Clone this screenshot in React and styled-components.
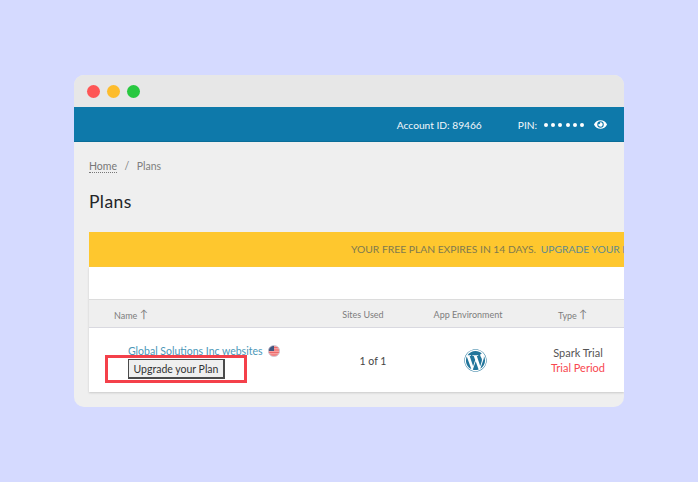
import React from "react";
import styled, { createGlobalStyle } from "styled-components";
import { FaWordpress, FaEye } from "react-icons/fa";

const Global = createGlobalStyle`
  html, body { margin: 0; padding: 0; background: #d5daff; }
  body { font-family: "Lato", "Open Sans", sans-serif; }
`;
const Page = styled.div`
  width: 698px; height: 482px; padding: 75px 74px; box-sizing: border-box; overflow: hidden;
`;
const Window = styled.div`
  width: 550px; height: 332px; border-radius: 10px; overflow: hidden; background: #efefef; display: flex; flex-direction: column;
`;
const TitleBar = styled.div`
  height: 32px; background: #e7e7e7; display: flex; align-items: center; gap: 7px; padding: 0 0 0 13px; flex: none;
`;
const Dot = styled.span`
  width: 13px; height: 13px; border-radius: 50%; background: ${p => p.$c}; display: block; margin-top: 1px;
`;
const TopBar = styled.div`
  height: 35px; flex: none; box-sizing: border-box; background: #0e79aa; border-bottom: 1px solid #0a6d98; color: #f2f7fa;
  display: flex; align-items: center; justify-content: flex-end; padding: 1px 17px 0 0; font-size: 10.2px;
`;
const Account = styled.span` margin-right: 36px;`;
const Pin = styled.span` display: flex; align-items: center; gap: 6px;`;
const Dots = styled.span` display: flex; gap: 3.2px; margin: 1px 4px 0 1px;`;
const PinDot = styled.i` width: 4px; height: 4px; border-radius: 50%; background: #fff; display: block;`;
const Content = styled.div` flex: 1; padding: 0 0 0 15px; display: flex; flex-direction: column; min-width: 0;`;
const Crumbs = styled.div`
  margin-top: 17px; height: 14px; display: flex; align-items: center; font-size: 10.5px; color: #7e7e7e; gap: 7.5px;
`;
const HomeLink = styled.a` color: #777; border-bottom: 1px dotted #777; line-height: 12px;`;
const Title = styled.h1`
  margin: 18px 0 0; font-size: 17.5px; line-height: 22px; font-weight: 400; color: #232528; letter-spacing: .4px;
`;
const Banner = styled.div`
  margin-top: 19px; height: 35px; width: 535px; flex: none; background: #fec72e; box-sizing: border-box; white-space: nowrap; overflow: hidden;
  font-size: 10.3px; line-height: 35px; color: #7e7a50; padding-left: 262px;
`;
const BannerLink = styled.a` color: #5e8a8f; margin-left: 2px;`;
const Card = styled.div`
  position: relative; width: 535px; background: #fff; box-shadow: 0 1px 2px #c9c9c9; flex: none;
`;
const Spacer = styled.div` height: 33px; box-sizing: border-box; border-bottom: 1px solid #dcdcdc;`;
const HeadRow = styled.div`
  display: grid; grid-template-columns: 226px 96px 114px 99px; height: 28px; box-sizing: border-box; background: #efefef; border-bottom: 1px solid #d9d9e0;
  align-items: center; font-size: 9px; color: #7d7d7d; padding-top: 1px;
`;
const HeadCell = styled.div`
  text-align: ${p => p.$left ? "left" : "center"}; padding-left: ${p => p.$left ? "25px" : "0"}; padding-right: ${p => p.$pr || 0}px;
`;
const Arrow = styled.span` font-size: 11px; margin-left: 2px; position: relative; top: -1px;`;
const Row = styled.div`
  display: grid; grid-template-columns: 226px 96px 114px 99px; height: 64px; align-items: center;
`;
const NameCell = styled.div` align-self: start; padding: 15px 0 0 39px; display: flex; flex-direction: column; align-items: flex-start;`;
const NameLine = styled.div` display: flex; align-items: center; gap: 6px; height: 16px;`;
const SiteLink = styled.a` color: #4b97b8; font-size: 10.5px;`;
const UpgradeBtn = styled.button`
  width: 97px; height: 20px; box-sizing: border-box; padding: 0; background: #efefef; border: 1px solid #4a4a4a; border-right-width: 2px; border-bottom-width: 2px;
  font-family: inherit; font-size: 10.5px; color: #333;
`;
const Highlight = styled.div`
  position: absolute; left: 16px; top: 88px; width: 142px; height: 28px; box-sizing: border-box; border: 3px solid #f4404a; pointer-events: none;
`;
const Cell = styled.div` text-align: center; font-size: 10.5px; color: #444; padding: 1px 0 0 20px;`;
const Logo = styled.div` display: flex; justify-content: center; color: #21759b; padding-left: 14px;`;
const TypeCell = styled.div` text-align: center; font-size: 11px; line-height: 15px; color: #555; padding-left: 7px;`;
const Trial = styled.div` color: #f8474f;`;
const Flag = () => (
  <svg width="12" height="12" viewBox="0 0 12 12">
    <defs><clipPath id="c"><circle cx="6" cy="6" r="5.6" /></clipPath></defs>
    <g clipPath="url(#c)">
      <rect width="12" height="12" fill="#f6a0a0" />
      <path d="M0 2.5h12M0 5h12M0 7.5h12M0 10h12" stroke="#ee6a6a" strokeWidth="1" />
      <rect width="6" height="6" fill="#3f5680" />
    </g>
    <circle cx="6" cy="6" r="5.6" fill="none" stroke="#c8c8d4" strokeWidth=".8" />
  </svg>
);

export default function App() {
  return (
    <Page>
      <Global />
      <Window>
        <TitleBar>
          <Dot $c="#fe5656" /><Dot $c="#fdbc2c" /><Dot $c="#28c840" />
        </TitleBar>
        <TopBar>
          <Account>Account ID: 89466</Account>
          <Pin>
            PIN:
            <Dots>{[0,1,2,3,4,5].map(i => <PinDot key={i} />)}</Dots>
            <FaEye size={13} color="#fff" />
          </Pin>
        </TopBar>
        <Content>
          <Crumbs><HomeLink>Home</HomeLink><span>/</span><span>Plans</span></Crumbs>
          <Title>Plans</Title>
          <Banner>YOUR FREE PLAN EXPIRES IN 14 DAYS. <BannerLink>UPGRADE YOUR PLAN</BannerLink></Banner>
          <Card>
            <Spacer />
            <HeadRow>
              <HeadCell $left>Name<Arrow>↑</Arrow></HeadCell>
              <HeadCell>Sites Used</HeadCell>
              <HeadCell>App Environment</HeadCell>
              <HeadCell $pr={4}>Type<Arrow>↑</Arrow></HeadCell>
            </HeadRow>
            <Row>
              <NameCell>
                <NameLine><SiteLink>Global Solutions Inc websites</SiteLink><Flag /></NameLine>
                <UpgradeBtn>Upgrade your Plan</UpgradeBtn>
              </NameCell>
              <Cell>1 of 1</Cell>
              <Logo><FaWordpress size={23} /></Logo>
              <TypeCell>Spark Trial<Trial>Trial Period</Trial></TypeCell>
            </Row>
            <Highlight />
          </Card>
        </Content>
      </Window>
    </Page>
  );
}
